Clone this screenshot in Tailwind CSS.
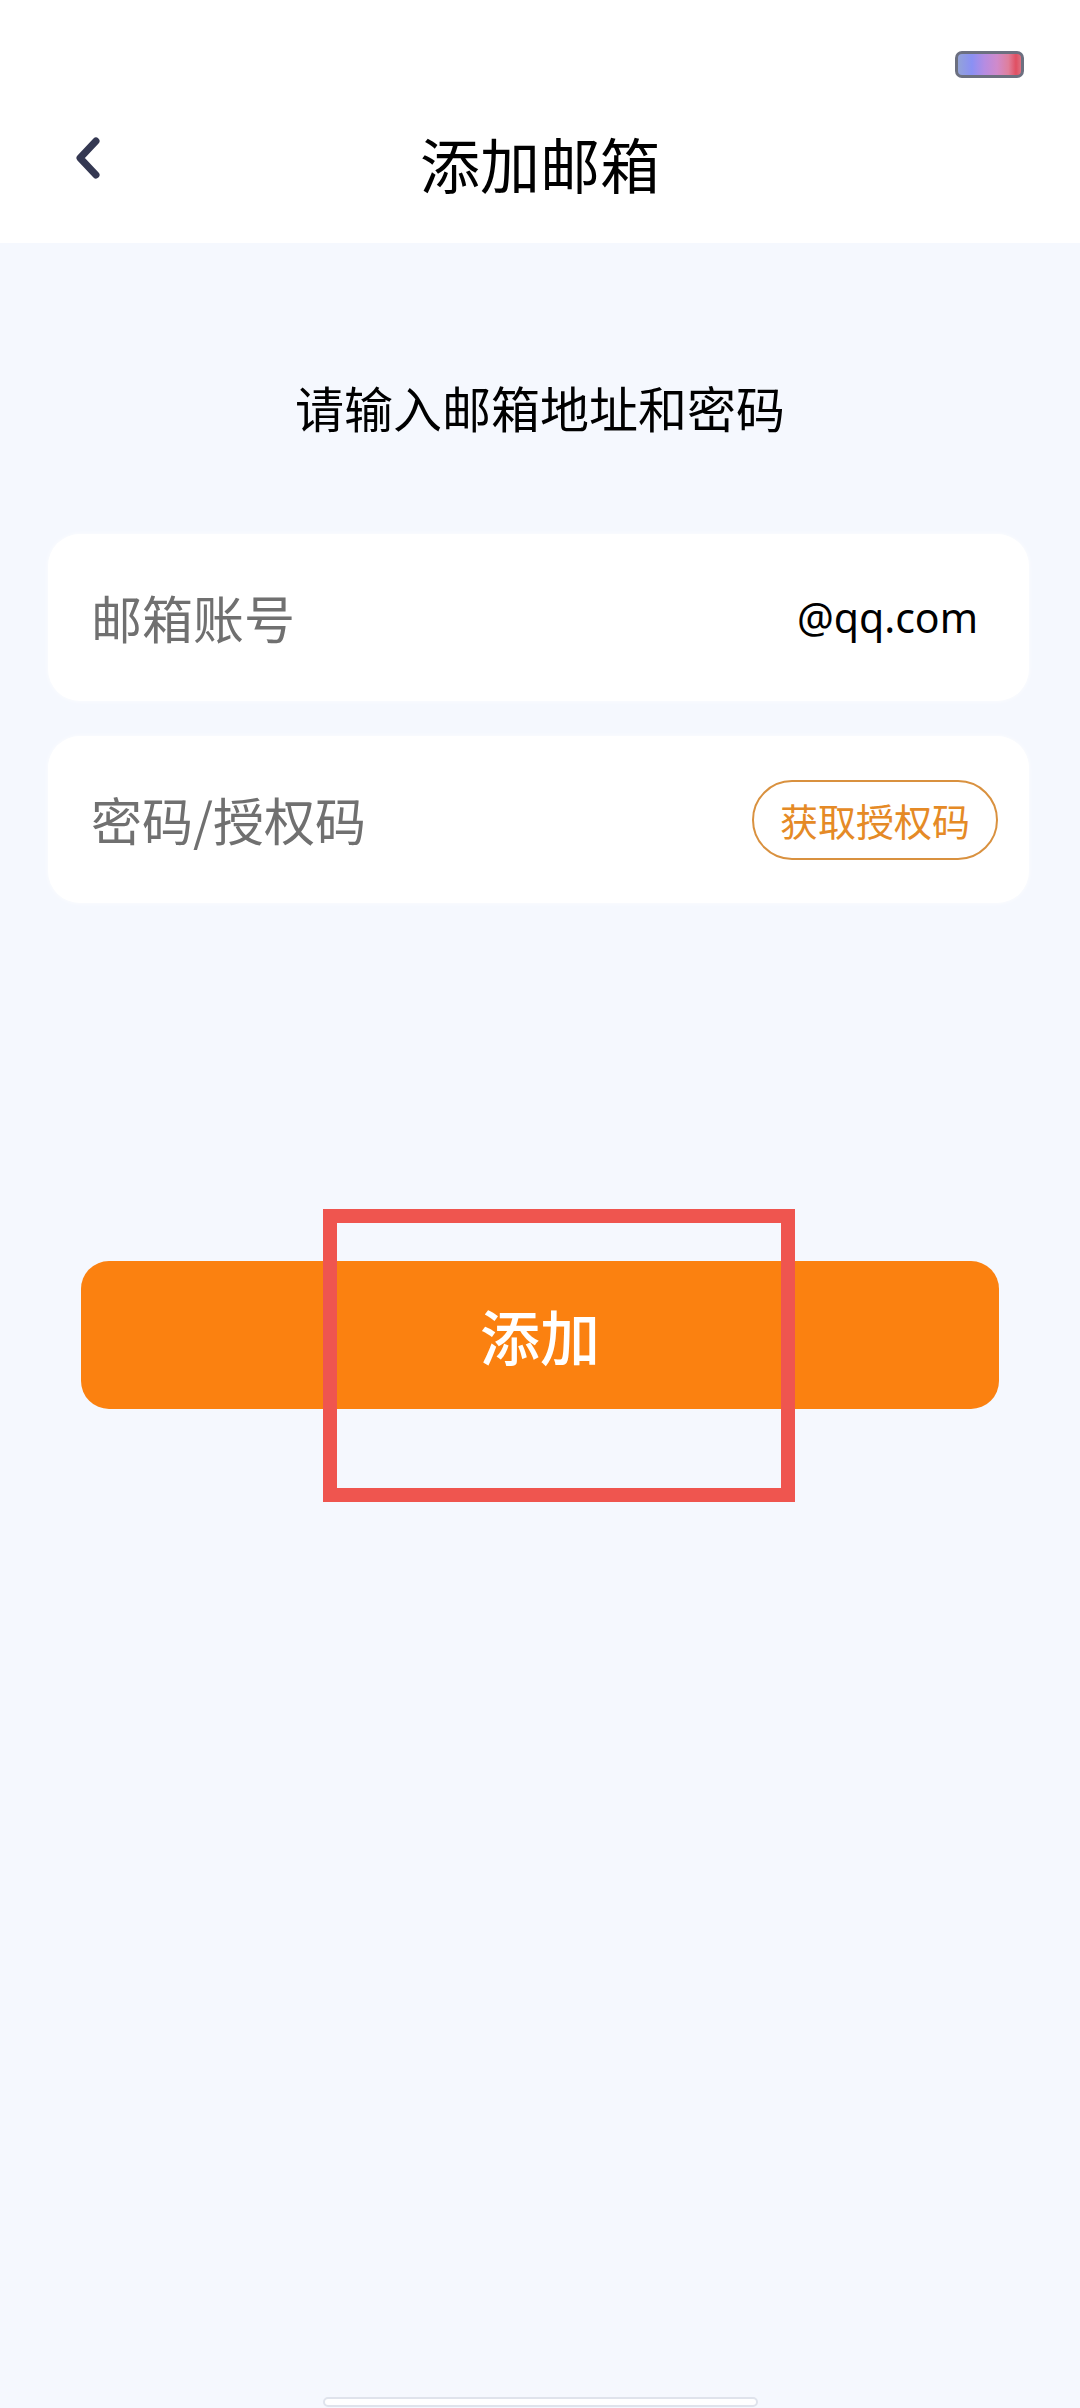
<!DOCTYPE html>
<html lang="zh-CN">
<head>
  <meta charset="UTF-8">
  <meta name="viewport" content="width=device-width, initial-scale=1.0">
  <title>添加邮箱</title>
  <script src="https://cdn.jsdelivr.net/npm/@tailwindcss/browser@4"></script>
</head>
<body class="relative h-[2408px] w-[1080px] overflow-hidden bg-[#f5f8fe] font-['Noto_Sans_CJK_SC','Noto_Sans',sans-serif] text-black">
  <!-- Top bar -->
  <header class="h-[243px] bg-white">
    <div class="flex h-[118px] justify-end pr-[56px] pt-[51px]">
      <!-- Battery -->
      <div class="h-[27px] w-[69px] rounded-[7px] border-[3px] border-[#6c7080] bg-[linear-gradient(90deg,#93a3d8_0%,#8a90f4_22%,#b58ce2_42%,#d08acb_62%,#df7f9c_80%,#e04f62_92%,#dd6f80_100%)] blur-[0.5px]"></div>
    </div>
    <div class="relative flex h-[90px] items-center justify-center">
      <button class="absolute left-[70px] top-[13px]">
        <svg class="block" width="36" height="54" viewBox="0 0 36 54" fill="none">
          <path d="M26 10 L10 27 L26 44" stroke="#343852" stroke-width="7" stroke-linecap="round" stroke-linejoin="round" />
        </svg>
      </button>
      <h1 class="text-[60px] leading-[90px]">添加邮箱</h1>
    </div>
  </header>

  <main class="flex flex-col">
    <p class="mt-[129px] text-center text-[49px] leading-[70px]">请输入邮箱地址和密码</p>

    <!-- Form fields -->
    <div class="ml-[48px] mr-[51px] mt-[92px] flex flex-col gap-[35px]">
      <div class="flex h-[167px] items-center justify-between rounded-[32px] bg-white pl-[43px] pr-[51px] shadow-[0_0_5px_rgba(255,255,255,0.8)]">
        <span class="text-[51px] text-[#707070]">邮箱账号</span>
        <span class="font-['Noto_Sans',sans-serif] text-[41px]">@qq.com</span>
      </div>
      <div class="flex h-[167px] items-center justify-between rounded-[32px] bg-white pl-[43px] pr-[31px] shadow-[0_0_5px_rgba(255,255,255,0.8)]">
        <span class="text-[51px] text-[#707070]">密码/授权码</span>
        <button class="flex h-[80px] w-[246px] items-center justify-center rounded-full border-[2px] border-[#d9913f] text-[38px] text-[#e58a26]">获取授权码</button>
      </div>
    </div>

    <button class="ml-[81px] mt-[358px] flex h-[148px] w-[918px] items-center justify-center rounded-[28px] bg-[#fb8110] text-[60px] font-medium text-white">添加</button>
  </main>

  <!-- Highlight frame over the submit button -->
  <div class="absolute left-[323px] top-[1209px] h-[293px] w-[472px] border-[14px] border-[#ef554f]"></div>

  <!-- Home indicator -->
  <div class="absolute left-[323px] top-[2397px] h-[10px] w-[435px] rounded-full border-[2px] border-[#dfe3ec] bg-white"></div>
</body>
</html>
